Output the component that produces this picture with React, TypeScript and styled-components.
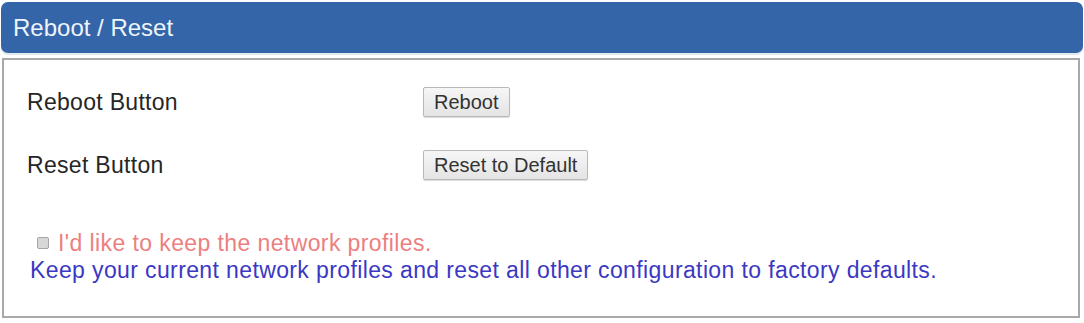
import React from "react";
import styled, { createGlobalStyle } from "styled-components";

const Global = createGlobalStyle`
  html, body { margin: 0; padding: 0; background: #ffffff; }
  body { font-family: "Liberation Sans", Arial, sans-serif; }
`;

const Page = styled.div`
  width: 1084px;
  height: 323px;
  padding: 2px 1px 0 1px;
  box-sizing: border-box;
  display: flex;
  flex-direction: column;
`;

const Header = styled.div`
  height: 51px;
  background: #3465a9;
  border-radius: 7px;
  display: flex;
  align-items: center;
  padding-left: 12px;
  color: #eef4fb;
  font-size: 24px;
  box-shadow: 0 2px 0 #e3e8ee;
`;

const Panel = styled.div`
  margin: 5px 3px 0 1px;
  height: 260px;
  box-sizing: border-box;
  border: 2px solid #a9a9a9;
  padding: 27px 23px 0 23px;
  display: flex;
  flex-direction: column;
`;

const Row = styled.div<{ $gap: number }>`
  display: grid;
  grid-template-columns: 396px auto;
  align-items: center;
  margin-bottom: ${(p) => p.$gap}px;
`;

const Label = styled.span`
  font-size: 23px;
  letter-spacing: 0.3px;
  line-height: 26px;
  color: #262626;
`;

const Button = styled.button`
  justify-self: start;
  height: 30px;
  padding: 0 10px;
  font-family: "Liberation Sans", Arial, sans-serif;
  font-size: 20px;
  color: #333;
  background: linear-gradient(#f6f6f6, #e4e4e4);
  border: 1px solid #b9b9b9;
  border-radius: 2px;
  box-shadow: 0 1px 1px rgba(0, 0, 0, 0.15);
`;

const CheckRow = styled.label`
  display: flex;
  align-items: center;
  gap: 9px;
  margin-left: 10px;
  margin-top: 50px;
  font-size: 23px;
  letter-spacing: 0.4px;
  line-height: 26px;
  color: #ec7f7f;
`;

const Box = styled.span`
  width: 10px;
  height: 10px;
  border: 1px solid #a5a5a5;
  background: #d7d7d7;
  border-radius: 2px;
`;

const Note = styled.div`
  margin-top: 1px;
  margin-left: 3px;
  font-size: 23px;
  letter-spacing: 0.38px;
  line-height: 26px;
  color: #3b38c4;
`;

export default function App() {
  return (
    <>
      <Global />
      <Page>
        <Header>Reboot / Reset</Header>
        <Panel>
          <Row $gap={33}>
            <Label>Reboot Button</Label>
            <Button>Reboot</Button>
          </Row>
          <Row $gap={0}>
            <Label>Reset Button</Label>
            <Button>Reset to Default</Button>
          </Row>
          <CheckRow>
            <Box />
            I'd like to keep the network profiles.
          </CheckRow>
          <Note>
            Keep your current network profiles and reset all other configuration to factory defaults.
          </Note>
        </Panel>
      </Page>
    </>
  );
}
